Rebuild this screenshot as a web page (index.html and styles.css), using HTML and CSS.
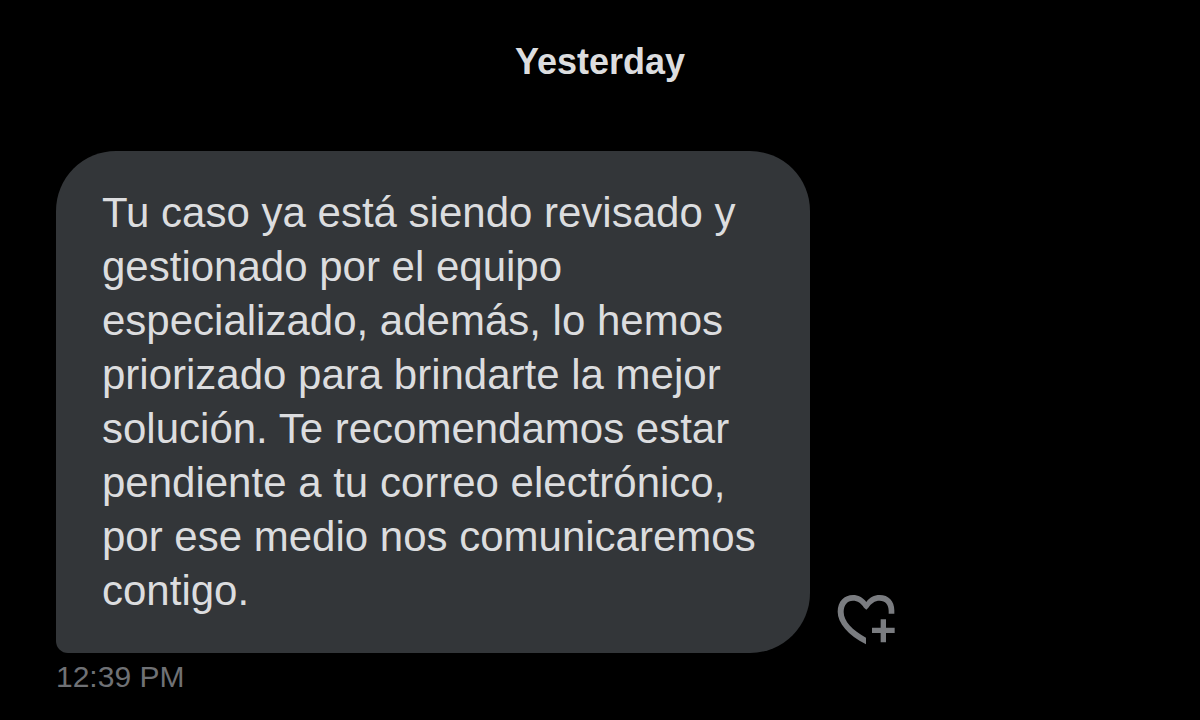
FILE: index.html
```html
<!DOCTYPE html>
<html lang="es">
<head>
    <meta charset="UTF-8">
    <meta name="viewport" content="width=device-width, initial-scale=1.0">
    <title>Messages</title>
    <link rel="stylesheet" href="styles.css">
</head>
<body>
    <main class="conversation">
        <h1 class="day">Yesterday</h1>

        <div class="message">
            <p class="bubble">Tu caso ya está siendo revisado y gestionado por el equipo especializado, además, lo hemos priorizado para brindarte la mejor solución. Te recomendamos estar pendiente a tu correo electrónico, por ese medio nos comunicaremos contigo.</p>
            <button class="react-btn" type="button" aria-label="Add reaction">
                <svg class="react-icon" viewBox="51 41 174 156" aria-hidden="true">
                    <path d="M223 100H206V92C206 72 196 61 179 61C164 61 154 69 145 82L139 88L132 82C123 68 113 61 99 61C81 61 71 75 71 95C71 122 97 150 138 172V192C84 164 53 128 53 94C53 63 73 44 99 44C115 44 128 51 139 65C149 51 162 44 179 44C206 44 223 62 223 90Z"/>
                    <path d="M182 117H198V142H224V158H198V186H182V158H156V142H182Z"/>
                </svg>
            </button>
        </div>

        <time class="time" datetime="12:39">12:39 PM</time>
    </main>
</body>
</html>
```

FILE: styles.css
```css
* { margin: 0; padding: 0; box-sizing: border-box; }

body {
    background: #000;
    color: #dcdddf;
    font-family: "Liberation Sans", Arial, sans-serif;
}

.conversation {
    padding: 40px 56px 24px;
}

.day {
    font-size: 36px;
    line-height: 44px;
    font-weight: bold;
    text-align: center;
    margin-bottom: 67px;
}

.message {
    display: flex;
    align-items: flex-end;
    gap: 27px;
}

.bubble {
    max-width: 754px;
    padding: 35px 46px;
    background: #333639;
    border-radius: 60px 60px 60px 12px;
    font-size: 42px;
    line-height: 54px;
}

.react-btn {
    flex: none;
    margin-bottom: 7px;
    background: none;
    border: none;
    color: #7a7c80;
    cursor: pointer;
}

.react-icon {
    display: block;
    width: 58px;
    height: 52px;
    fill: currentColor;
}

.time {
    display: block;
    margin-top: 6px;
    color: #6f7175;
    font-size: 30px;
    line-height: 36px;
}
```
